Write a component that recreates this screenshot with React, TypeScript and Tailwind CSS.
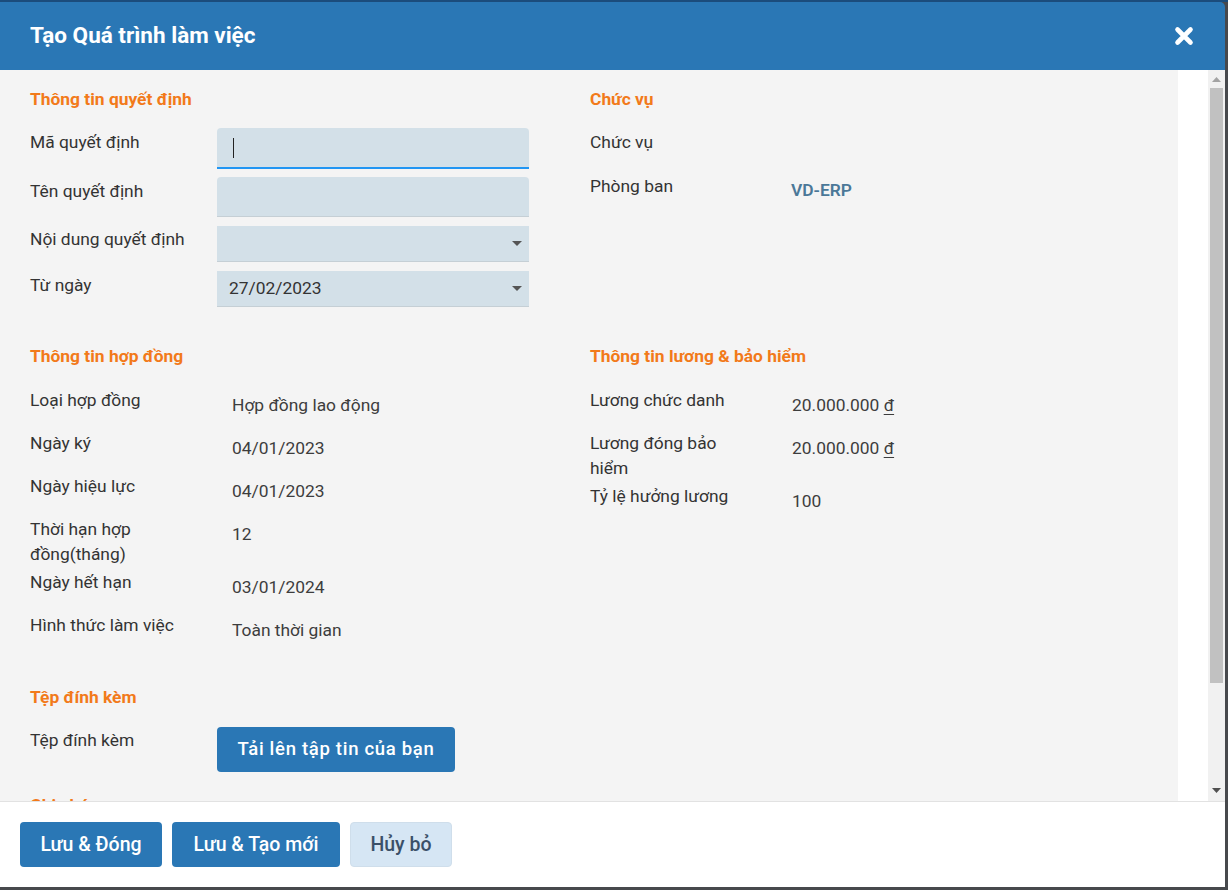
import { ReactNode } from "react"

const font = { fontFamily: "Roboto, 'Liberation Sans', sans-serif" }

function SectionTitle({ children, className = "" }: { children: ReactNode; className?: string }) {
  return <h3 className={`text-[17.4px] leading-6 font-bold text-[#f27a1a] ${className}`}>{children}</h3>
}

function InfoRow({ label, value, valueClass = "text-[#3d3d3d]" }: { label: string; value?: ReactNode; valueClass?: string }) {
  return (
    <div className="flex min-h-[43px] pb-[3px]">
      <div className="w-[202px] shrink-0 pr-[40px] text-[17.4px] leading-[25px] text-[#333]">{label}</div>
      <div className={`pt-[5px] text-[17.4px] leading-[25px] ${valueClass}`}>{value}</div>
    </div>
  )
}

function Caret() {
  return (
    <svg width="10" height="6" viewBox="0 0 10 6" className="absolute right-[7px] top-1/2 -translate-y-1/2">
      <path d="M0 0 L10 0 L5 5 Z" fill="#555" />
    </svg>
  )
}

function Dong() {
  return <span className="underline underline-offset-[3px] decoration-1">đ</span>
}

export default function App() {
  return (
    <div style={font} className="w-[1228px] h-[890px] bg-[#47494d] flex flex-col overflow-hidden">
      <div className="h-[2px] bg-[#1b4c7c] shrink-0" />
      <div className="w-[1225px] h-[885px] flex flex-col rounded-tr-[5px] overflow-hidden">
        {/* header */}
        <div className="h-[68px] shrink-0 bg-[#2a77b5] flex items-center justify-between pl-[30px] pr-[31px]">
          <h2 className="text-[22.5px] font-bold text-white">Tạo Quá trình làm việc</h2>
          <svg width="20" height="20" viewBox="0 0 20 20">
            <path d="M3.5 3.5 L16.5 16.5 M16.5 3.5 L3.5 16.5" stroke="#fff" strokeWidth="4.6" strokeLinecap="round" />
          </svg>
        </div>

        {/* body */}
        <div className="flex-1 flex min-h-0">
          <div className="w-[1178px] bg-[#f4f4f4] overflow-hidden pl-[30px] pt-[17px]">
            <div className="grid grid-cols-[530px_1fr] gap-x-[30px]">
              {/* section 1 left */}
              <div>
                <SectionTitle className="mb-[17px]">Thông tin quyết định</SectionTitle>
                <div className="flex mb-[8px]">
                  <div className="w-[187px] pt-[2px] text-[17.4px] leading-6 text-[#333]">Mã quyết định</div>
                  <div className="relative w-[312px] h-[41px] bg-[#d3e0e8] rounded-t-[4px] border-b-2 border-[#2196f3]">
                    <div className="absolute left-[16px] top-[10px] w-px h-[20px] bg-[#222]" />
                  </div>
                </div>
                <div className="flex mb-[9px]">
                  <div className="w-[187px] pt-[2px] text-[17.4px] leading-6 text-[#333]">Tên quyết định</div>
                  <div className="w-[312px] h-[40px] bg-[#d3e0e8] rounded-t-[4px] border-b border-[#c5cfd5]" />
                </div>
                <div className="flex mb-[9px]">
                  <div className="w-[187px] pt-[1px] text-[17.4px] leading-6 text-[#333]">Nội dung quyết định</div>
                  <div className="relative w-[312px] h-[36px] bg-[#d3e0e8] border-b border-[#c5cfd5]">
                    <Caret />
                  </div>
                </div>
                <div className="flex">
                  <div className="w-[187px] pt-[2px] text-[17.4px] leading-6 text-[#333]">Từ ngày</div>
                  <div className="relative w-[312px] h-[36px] bg-[#d3e0e8] border-b border-[#c5cfd5] pl-[12px] flex items-center text-[17.4px] text-[#333]">
                    27/02/2023
                    <Caret />
                  </div>
                </div>
              </div>

              {/* section 1 right */}
              <div>
                <SectionTitle className="mb-[17px]">Chức vụ</SectionTitle>
                <div className="flex h-[44px]">
                  <div className="w-[201px] pt-[2px] text-[17.4px] leading-6 text-[#333]">Chức vụ</div>
                </div>
                <div className="flex h-[44px]">
                  <div className="w-[201px] pt-[2px] text-[17.4px] leading-6 text-[#333]">Phòng ban</div>
                  <div className="pt-[6px] text-[17.4px] leading-6 font-semibold text-[#4b7898]">VD-ERP</div>
                </div>
              </div>

              {/* section 2 left */}
              <div className="mt-[37px]">
                <SectionTitle className="mb-[20px]">Thông tin hợp đồng</SectionTitle>
                <InfoRow label="Loại hợp đồng" value="Hợp đồng lao động" />
                <InfoRow label="Ngày ký" value="04/01/2023" />
                <InfoRow label="Ngày hiệu lực" value="04/01/2023" />
                <InfoRow label="Thời hạn hợp đồng(tháng)" value="12" />
                <InfoRow label="Ngày hết hạn" value="03/01/2024" />
                <InfoRow label="Hình thức làm việc" value="Toàn thời gian" />
              </div>

              {/* section 2 right */}
              <div className="mt-[37px]">
                <SectionTitle className="mb-[20px]">Thông tin lương &amp; bảo hiểm</SectionTitle>
                <InfoRow label="Lương chức danh" value={<>20.000.000 <Dong /></>} />
                <InfoRow label="Lương đóng bảo hiểm" value={<>20.000.000 <Dong /></>} />
                <InfoRow label="Tỷ lệ hưởng lương" value="100" />
              </div>

              {/* section 3 */}
              <div className="mt-[29px]">
                <SectionTitle className="mb-[18px]">Tệp đính kèm</SectionTitle>
                <div className="flex">
                  <div className="w-[187px] pt-[1px] text-[17.4px] leading-[25px] text-[#333]">Tệp đính kèm</div>
                  <button className="w-[238px] h-[45px] rounded-[4px] bg-[#2a77b5] text-white text-[18.5px] font-medium tracking-[0.7px]">
                    Tải lên tập tin của bạn
                  </button>
                </div>
                <SectionTitle className="mt-[21px]">Ghi chú</SectionTitle>
              </div>
              <div />
            </div>
          </div>
          <div className="w-[30px] bg-white" />
          <div className="w-[17px] bg-[#f1f1f1] flex flex-col items-center">
            <svg width="9" height="5" viewBox="0 0 9 5" className="mt-[7px]">
              <path d="M0 5 L4.5 0 L9 5 Z" fill="#a3a3a3" />
            </svg>
            <div className="mt-[6px] w-[13px] h-[595px] bg-[#c1c1c1]" />
            <div className="flex-1" />
            <svg width="9" height="5" viewBox="0 0 9 5" className="mb-[8px]">
              <path d="M0 0 L9 0 L4.5 5 Z" fill="#505050" />
            </svg>
          </div>
        </div>

        {/* footer */}
        <div className="h-[86px] shrink-0 bg-white border-t border-[#e2e2e2] flex items-center gap-[10px] pl-[20px]">
          <button className="w-[142px] h-[45px] rounded-[4px] bg-[#2a77b5] text-white text-[19.5px] font-medium">Lưu &amp; Đóng</button>
          <button className="w-[168px] h-[45px] rounded-[4px] bg-[#2a77b5] text-white text-[19.5px] font-medium">Lưu &amp; Tạo mới</button>
          <button className="w-[102px] h-[45px] rounded-[4px] bg-[#d6e6f4] border border-[#cfdeeb] text-[#3b5068] text-[19.5px] font-medium">Hủy bỏ</button>
        </div>
      </div>
      <div className="flex-1" />
    </div>
  )
}
